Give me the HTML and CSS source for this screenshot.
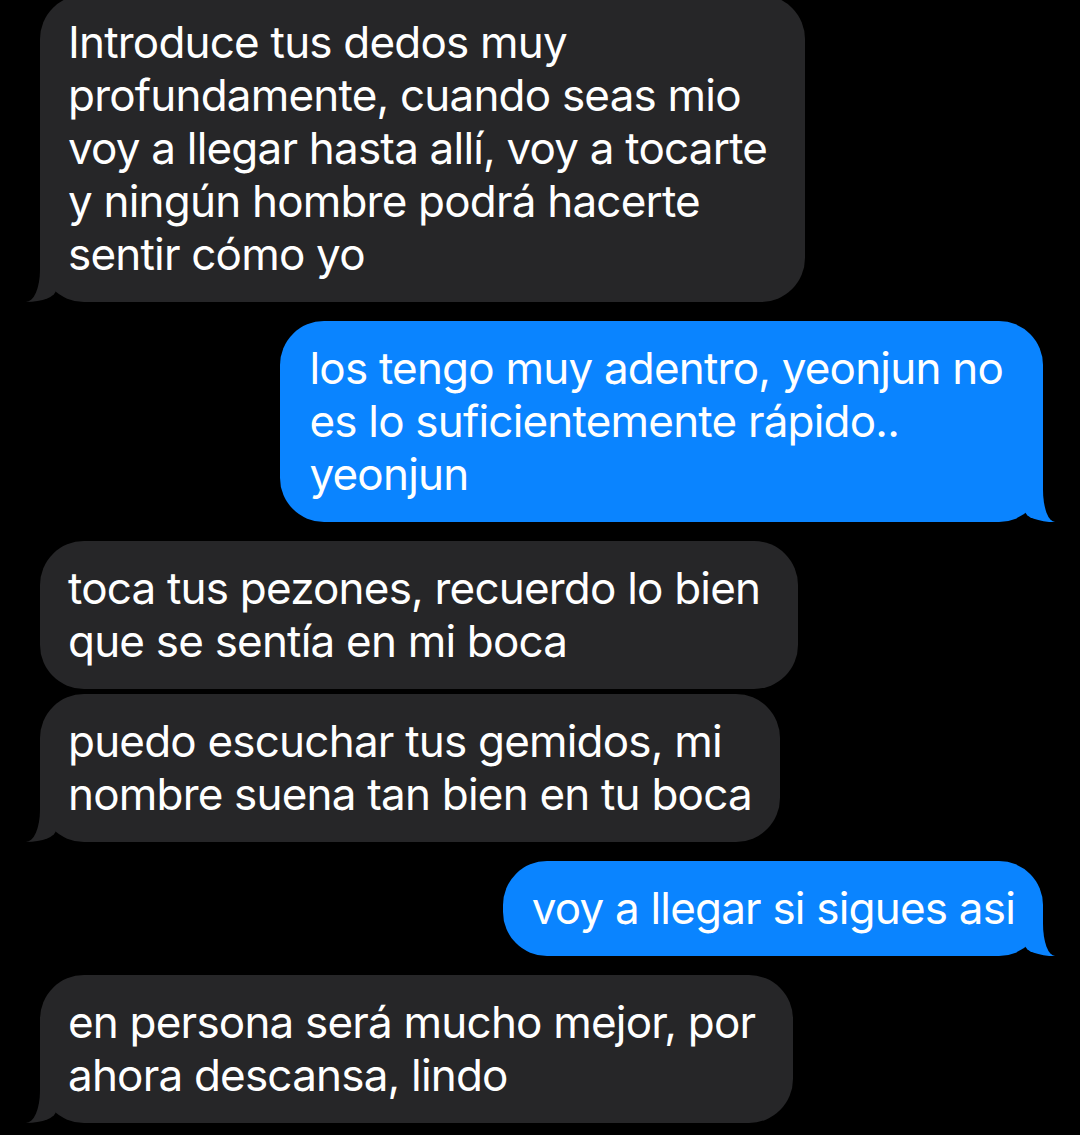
FILE: index.html
```html
<!DOCTYPE html>
<html lang="es">
<head>
    <meta charset="UTF-8">
    <meta name="viewport" content="width=device-width, initial-scale=1.0">
    <title>Mensajes</title>
    <link rel="stylesheet" href="styles.css">
</head>
<body>
    <div class="thread">
        <div class="msg them tail">Introduce tus dedos muy<br>profundamente, cuando seas mio<br>voy a llegar hasta allí, voy a tocarte<br>y ningún hombre podrá hacerte<br>sentir cómo yo</div>
        <div class="msg me tail">los tengo muy adentro, yeonjun no<br>es lo suficientemente rápido..<br>yeonjun</div>
        <div class="msg them">toca tus pezones, recuerdo lo bien<br>que se sentía en mi boca</div>
        <div class="msg them tail cont snug">puedo escuchar tus gemidos, mi<br>nombre suena tan bien en tu boca</div>
        <div class="msg me tail snug">voy a llegar si sigues asi</div>
        <div class="msg them tail">en persona será mucho mejor, por<br>ahora descansa, lindo</div>
    </div>
</body>
</html>
```

FILE: styles.css
```css
body {
    margin: 0;
    background-color: #000;
    font-family: 'Inter', 'Noto Sans', sans-serif;
    color: #fff;
    overflow: hidden;
}

.thread {
    display: flex;
    flex-direction: column;
    padding: 0 37px 0 40px;
    margin-top: -24px;
}

.msg {
    position: relative;
    z-index: 0;
    max-width: 780px;
    margin-top: 19px;
    padding: 21px 38px 21px 28px;
    border-radius: 44px;
    font-size: 44px;
    line-height: 53px;
    letter-spacing: -0.8px;
    white-space: nowrap;
}

.msg.cont {
    margin-top: 5px;
}

.them {
    align-self: flex-start;
    background-color: #262628;
}

.me {
    align-self: flex-end;
    background-color: #0a84ff;
    padding-left: 29px;
    padding-right: 40px;
}

.msg.snug {
    padding-right: 28px;
}

/* bubble tails */
.tail::before,
.tail::after {
    content: "";
    position: absolute;
    bottom: 0;
    height: 45px;
    z-index: -1;
}

.them.tail::before {
    left: -14px;
    width: 30px;
    background-color: #262628;
    border-bottom-right-radius: 30px 12px;
}

.them.tail::after {
    left: -40px;
    width: 40px;
    background-color: #000;
    border-bottom-right-radius: 14px 32px;
}

.me.tail::before {
    right: -12px;
    width: 30px;
    background-color: #0a84ff;
    border-bottom-left-radius: 30px 11px;
}

.me.tail::after {
    right: -40px;
    width: 40px;
    background-color: #000;
    border-bottom-left-radius: 12px 32px;
}
```
